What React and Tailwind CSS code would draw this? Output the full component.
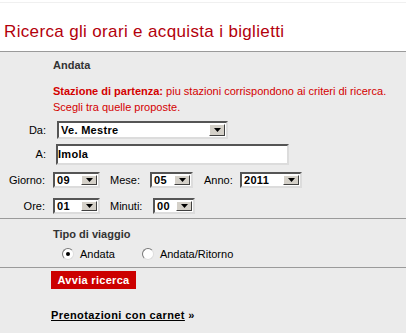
import React from 'react';

const Combo = ({ value, className }) => (
  <div
    className={`flex items-stretch bg-white border-2 border-t-[#555] border-l-[#555] border-r-[#dcdcdc] border-b-[#dcdcdc] ${className}`}
  >
    <span className="flex-1 pl-[2px] text-[11px] leading-[12px] font-bold text-black self-center tracking-[0.3px]">{value}</span>
    <span className="w-[16px] m-[1px] bg-[#d4d0c8] border border-t-white border-l-white border-r-[#404040] border-b-[#404040] flex items-center justify-center">
      <svg width="7" height="4" viewBox="0 0 7 4">
        <path d="M0 0h7L3.5 4z" fill="#000" />
      </svg>
    </span>
  </div>
);

const Radio = ({ checked }) => (
  <span className="w-[12px] h-[12px] rounded-full bg-white border border-t-[#777] border-l-[#777] border-r-[#ddd] border-b-[#ddd] flex items-center justify-center">
    {checked && <span className="w-[4px] h-[4px] rounded-full bg-black" />}
  </span>
);

const App = () => {
  return (
    <div
      className="w-[406px] h-[333px] overflow-hidden bg-[#ebebeb] text-[11px] text-black"
      style={{ fontFamily: '"Liberation Sans", Arial, sans-serif' }}
    >
      {/* Title */}
      <div className="bg-white pt-[2px]">
        <div className="border-t border-[#f0f0f0] h-[50px] border-b border-b-[#9a9a9a] px-[4px] pt-[19px]">
          <h1 className="text-[17px] leading-[19px] tracking-[0.35px] text-[#b3000b]">Ricerca gli orari e acquista i biglietti</h1>
        </div>
      </div>

      {/* Andata */}
      <div className="pl-[53px] pt-[7px]">
        <p className="font-bold text-[#333] leading-[13px]">Andata</p>
        <p className="mt-[11px] text-[#d40000] leading-[16px]">
          <span className="font-bold">Stazione di partenza:</span> piu stazioni corrispondono ai criteri di ricerca.
          <br />
          Scegli tra quelle proposte.
        </p>
      </div>

      <div className="mt-[6px] flex items-center">
        <span className="w-[46px] text-right">Da:</span>
        <Combo value="Ve. Mestre" className="ml-[11px] w-[171px] h-[18px]" />
      </div>
      <div className="mt-[5px] flex items-center">
        <span className="w-[46px] text-right">A:</span>
        <div className="ml-[10px] w-[233px] h-[21px] bg-white border-2 border-t-[#555] border-l-[#555] border-r-[#dcdcdc] border-b-[#dcdcdc] flex items-center">
          <span className="font-bold text-[11px] tracking-[0.3px]">Imola</span>
        </div>
      </div>

      <div className="mt-[7px] flex items-center">
        <span className="w-[45px] text-right">Giorno:</span>
        <Combo value="09" className="ml-[8px] w-[47px] h-[16px]" />
        <span className="ml-[10px] w-[33px]">Mese:</span>
        <Combo value="05" className="ml-[7px] w-[43px] h-[16px]" />
        <span className="ml-[11px] w-[30px]">Anno:</span>
        <Combo value="2011" className="ml-[6px] w-[62px] h-[16px]" />
      </div>
      <div className="mt-[9px] flex items-center">
        <span className="w-[45px] text-right">Ore:</span>
        <Combo value="01" className="ml-[8px] w-[47px] h-[16px]" />
        <span className="ml-[10px] w-[36px]">Minuti:</span>
        <Combo value="00" className="ml-[7px] w-[42px] h-[16px]" />
      </div>

      <div className="mt-[4px] border-t border-[#9a9a9a]" />

      <div className="pl-[53px] pt-[9px] h-[48px]">
        <p className="font-bold text-[#333] leading-[13px]">Tipo di viaggio</p>
        <div className="mt-[5px] flex items-center">
          <span className="ml-[9px]"><Radio checked /></span>
          <span className="ml-[6px]">Andata</span>
          <span className="ml-[27px]"><Radio /></span>
          <span className="ml-[6px]">Andata/Ritorno</span>
        </div>
      </div>

      <div className="border-t border-[#9a9a9a]" />

      <div className="pl-[51px] pt-[3px]">
        <button className="h-[18px] w-[85px] bg-[#cc0000] text-white font-bold text-[11px] leading-[18px] tracking-[0.3px]">
          Avvia ricerca
        </button>
        <p className="mt-[18px] font-bold tracking-[0.4px]">
          <a href="#" className="underline text-black">Prenotazioni con carnet</a> »
        </p>
      </div>
    </div>
  );
};

export default App;
